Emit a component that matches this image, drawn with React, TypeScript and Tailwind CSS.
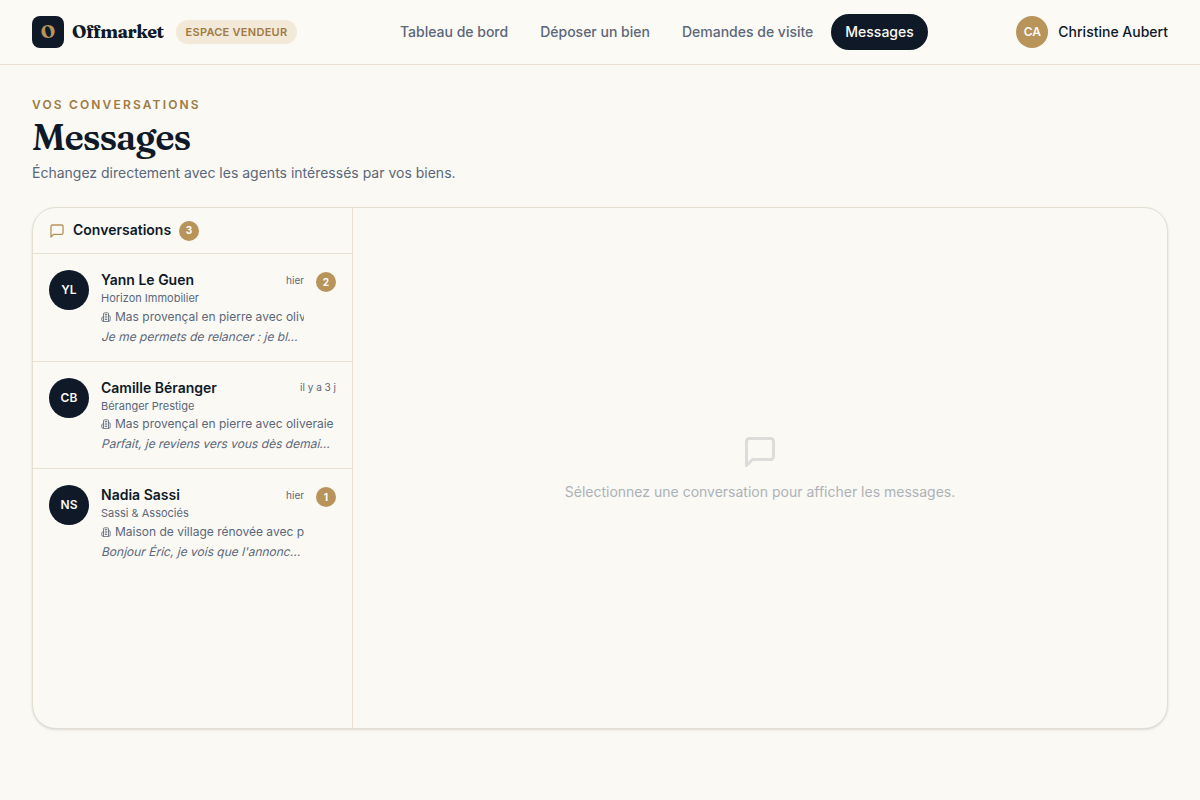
import { clsx } from "clsx";

type Conversation = {
  initials: string;
  name: string;
  agency: string;
  property: string;
  preview: string;
  date: string;
  unread: number;
};

const navItems = [
  { label: "Tableau de bord", active: false },
  { label: "Déposer un bien", active: false },
  { label: "Demandes de visite", active: false },
  { label: "Messages", active: true },
];

const conversations: Conversation[] = [
  {
    initials: "YL",
    name: "Yann Le Guen",
    agency: "Horizon Immobilier",
    property: "Mas provençal en pierre avec oliveraie",
    preview: "Je me permets de relancer : je bl...",
    date: "hier",
    unread: 2,
  },
  {
    initials: "CB",
    name: "Camille Béranger",
    agency: "Béranger Prestige",
    property: "Mas provençal en pierre avec oliveraie",
    preview: "Parfait, je reviens vers vous dès demai...",
    date: "il y a 3 j",
    unread: 0,
  },
  {
    initials: "NS",
    name: "Nadia Sassi",
    agency: "Sassi & Associés",
    property: "Maison de village rénovée avec piscine",
    preview: "Bonjour Éric, je vois que l'annonc...",
    date: "hier",
    unread: 1,
  },
];

function MessageIcon({ className }: { className?: string }) {
  return (
    <svg
      viewBox="0 0 24 24"
      fill="none"
      stroke="currentColor"
      strokeWidth="2"
      strokeLinecap="round"
      strokeLinejoin="round"
      className={className}
    >
      <path d="M21 15a2 2 0 0 1-2 2H7l-4 4V5a2 2 0 0 1 2-2h14a2 2 0 0 1 2 2z" />
    </svg>
  );
}

function BuildingIcon({ className }: { className?: string }) {
  return (
    <svg
      viewBox="0 0 24 24"
      fill="none"
      stroke="currentColor"
      strokeWidth="2"
      strokeLinecap="round"
      strokeLinejoin="round"
      className={className}
    >
      <path d="M6 22V4a2 2 0 0 1 2-2h8a2 2 0 0 1 2 2v18Z" />
      <path d="M6 12H4a2 2 0 0 0-2 2v6a2 2 0 0 0 2 2h2" />
      <path d="M18 9h2a2 2 0 0 1 2 2v9a2 2 0 0 1-2 2h-2" />
      <path d="M10 6h4" />
      <path d="M10 10h4" />
      <path d="M10 14h4" />
      <path d="M10 18h4" />
    </svg>
  );
}

function CountBadge({ count }: { count: number }) {
  return (
    <span className="flex h-5 w-5 shrink-0 items-center justify-center rounded-full bg-[#b8935a] text-[10px] font-bold text-white">
      {count}
    </span>
  );
}

function ConversationRow({ item, last }: { item: Conversation; last: boolean }) {
  return (
    <li
      className={clsx(
        "flex items-start gap-3 p-4",
        !last && "border-b border-[#e8e0d3]"
      )}
    >
      <div className="flex h-10 w-10 shrink-0 items-center justify-center rounded-full bg-[#0f1928] text-xs font-semibold text-[#fbfaf5]">
        {item.initials}
      </div>
      <div className="min-w-0 flex-1">
        <div className="flex items-center justify-between gap-2">
          <p className="truncate text-sm font-semibold text-[#0f1928]">
            {item.name}
          </p>
          <span className="shrink-0 text-[10px] text-[#5b677a]">
            {item.date}
          </span>
        </div>
        <p className="text-[11px] leading-[16.5px] text-[#5b677a]">
          {item.agency}
        </p>
        <p className="mt-0.5 flex items-center gap-1 overflow-hidden text-xs whitespace-nowrap text-[#5b677a]">
          <BuildingIcon className="h-2.5 w-2.5 shrink-0" />
          {item.property}
        </p>
        {/* slanted roman rather than the true italic face */}
        <p className="mt-1 origin-[0_12px] -skew-x-[14deg] text-xs whitespace-nowrap text-[#5b677a]">
          {item.preview}
        </p>
      </div>
      {item.unread > 0 && (
        <div className="mt-0.5">
          <CountBadge count={item.unread} />
        </div>
      )}
    </li>
  );
}

export default function App() {
  return (
    <div className="min-h-screen bg-[#faf9f4] font-['Inter',sans-serif] text-[#0f1928]">
      <header className="border-b border-[#e8e0d0] bg-[#fbfaf5]">
        <div className="flex h-16 items-center justify-between px-8">
          <div className="flex items-center gap-3">
            <div className="flex items-center gap-2">
              <span className="flex h-8 w-8 items-center justify-center rounded-lg bg-[#0f1928] font-['Fraunces','DejaVu_Serif',serif] text-lg font-bold text-[#b8935a]">
                O
              </span>
              <span className="font-['Fraunces','DejaVu_Serif',serif] text-lg font-bold tracking-[-0.028em]">
                Offmarket
              </span>
            </div>
            <span className="flex h-6 items-center rounded-full bg-[#f3e9d9] px-2.5 text-[11px] font-semibold tracking-wide text-[#a07a42] uppercase">
              Espace vendeur
            </span>
          </div>

          <nav className="flex items-center gap-1">
            {navItems.map((item) => (
              <a
                key={item.label}
                href="#"
                className={clsx(
                  "rounded-full px-3.5 py-2 text-sm font-medium",
                  item.active ? "bg-[#0f1928] text-[#fbfaf5]" : "text-[#5b677a]"
                )}
              >
                {item.label}
              </a>
            ))}
          </nav>

          <div className="flex items-center gap-2.5">
            <span className="flex h-8 w-8 items-center justify-center rounded-full bg-[#b8935a] text-xs font-semibold text-[#fbfaf5]">
              CA
            </span>
            <span className="text-sm font-medium">Christine Aubert</span>
          </div>
        </div>
      </header>

      <main className="px-8 pt-8">
        <p className="text-xs font-semibold tracking-[0.18em] text-[#a07a42] uppercase">
          Vos conversations
        </p>
        <h1 className="mt-1 font-['Fraunces','DejaVu_Serif',serif] text-4xl font-semibold tracking-[-0.028em]">
          Messages
        </h1>
        <p className="mt-1.5 text-sm text-[#5b677a]">
          Échangez directement avec les agents intéressés par vos biens.
        </p>

        <div className="mt-6 flex h-[522px] overflow-hidden rounded-3xl border border-[#e5dfd3] bg-[#faf9f4] shadow-sm">
          <aside className="w-80 shrink-0 border-r border-[#e8e0d3]">
            <div className="flex h-[46px] items-center gap-2 border-b border-[#e8e0d3] px-4">
              <MessageIcon className="h-4 w-4 text-[#b8935a]" />
              <h2 className="pb-0.5 text-sm font-semibold">Conversations</h2>
              <CountBadge count={3} />
            </div>
            <ul>
              {conversations.map((item, index) => (
                <ConversationRow
                  key={item.name}
                  item={item}
                  last={index === conversations.length - 1}
                />
              ))}
            </ul>
          </aside>

          <section className="flex flex-1 flex-col items-center justify-center gap-3">
            <MessageIcon className="h-9 w-9 text-[#dcdcdb]" />
            <p className="text-sm text-[#adb2b8]">
              Sélectionnez une conversation pour afficher les messages.
            </p>
          </section>
        </div>
      </main>
    </div>
  );
}
